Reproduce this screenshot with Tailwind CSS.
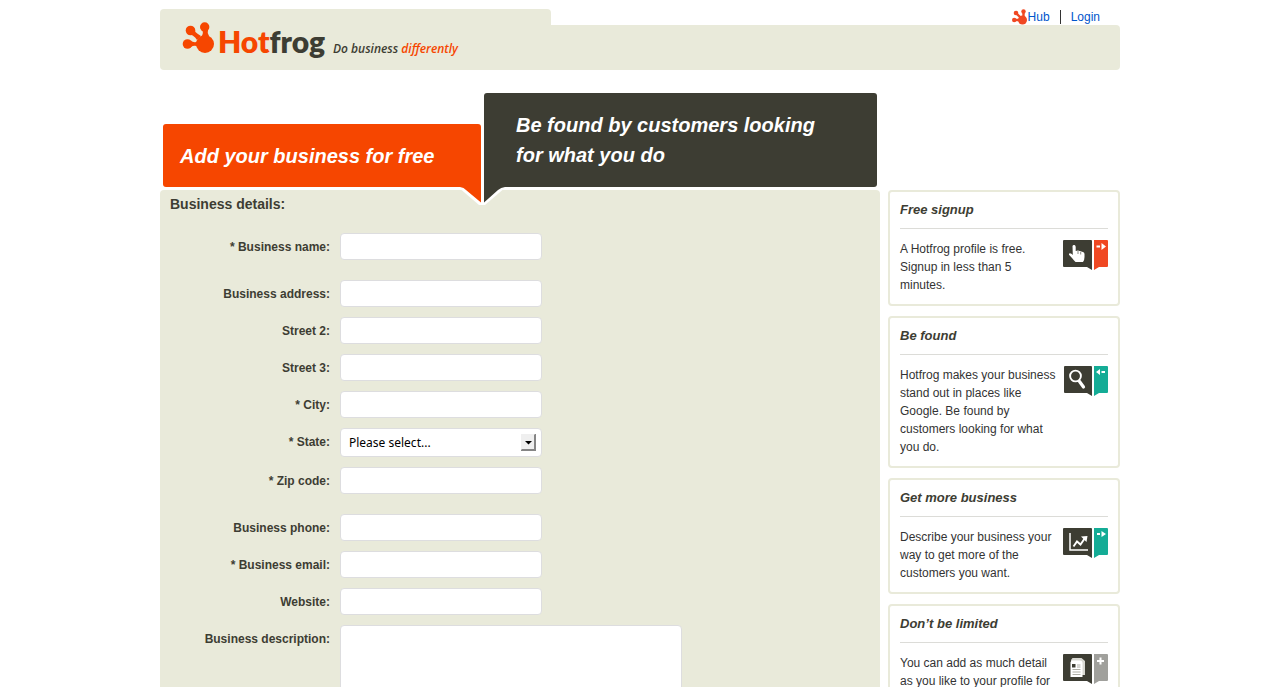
<!DOCTYPE html>
<html lang="en">
<head>
<meta charset="utf-8">
<meta name="viewport" content="width=device-width, initial-scale=1">
<title>Hotfrog - Add your business for free</title>
<script src="https://cdn.jsdelivr.net/npm/@tailwindcss/browser@4"></script>
</head>
<body class="bg-white font-['Liberation_Sans',Arial,sans-serif] text-[12px] leading-[18px] text-[#333]">
<div class="h-screen overflow-hidden">
<div class="mx-auto max-w-[960px]">

  <header class="pt-[9px]">
    <div class="flex h-4 items-stretch justify-between">
      <div class="w-[391px] rounded-t bg-[#e9eada]"></div>
      <nav class="flex items-center pr-5 text-[#0055cc]">
        <svg class="h-4 w-4" viewBox="0 0 16 16" fill="#f04823" stroke="#f04823" aria-hidden="true">
          <circle cx="10.500" cy="11" r="4.500" stroke="none"/><circle cx="4" cy="4" r="2.300" stroke="none"/><circle cx="11.500" cy="2.500" r="2.200" stroke="none"/><circle cx="2.200" cy="11" r="2.200" stroke="none"/>
          <path d="M4 4l6 6M11.500 3v7M2 11h8" stroke-width="2.400"/>
        </svg>
        <a href="#" class="mr-2.5">Hub</a>
        <a href="#" class="relative pl-[11px] before:absolute before:left-0 before:top-[2px] before:h-3.5 before:w-px before:bg-[#333]">Login</a>
      </nav>
    </div>
    <div class="flex h-[45px] items-center rounded-b rounded-tr bg-[#e9eada] pl-[22px]">
      <a href="#" class="-mt-5 flex items-end" aria-label="Hotfrog home">
        <svg class="h-8 w-8" viewBox="0 0 32 32" fill="#f64600" aria-hidden="true">
          <circle cx="23" cy="22" r="9"/><circle cx="8.500" cy="8.500" r="4.800"/><circle cx="22.700" cy="5" r="4.700"/><circle cx="5.500" cy="22" r="4.800"/>
          <path d="M20.500 8q1 3-.500 6h7q-2-3-1-6zM12 6.500q0 3.500 7 7.500l-4 4q-4-6-8-5.500zM9 19q3 2 7 .500v5q-4-1.500-7 .500z"/>
        </svg>
      </a>
      <span class="ml-1 -mt-3.5 font-['Lato',sans-serif] text-[30px] font-extrabold leading-8 text-[#3d3d33] [font-variant-ligatures:none]"><span class="text-[#f64600]">Hot</span>frog</span>
      <span class="ml-2 mt-[3px] font-['Open_Sans','Noto_Sans',sans-serif] text-[12px] font-semibold italic leading-4 text-[#3d3d33]">Do business <span class="text-[#f64600]">differently</span></span>
    </div>
  </header>

  <div class="mt-[23px] flex items-start">
    <main class="min-w-0 flex-1">
      <div class="relative flex items-end gap-[3px] px-[3px] pb-[3px] text-[20px] font-bold italic leading-[30px] text-white">
        <h1 class="flex h-[63px] w-[318px] items-center rounded-[3px] bg-[#f64600] px-[17px]">Add your business for free</h1>
        <h2 class="flex h-[94px] flex-1 items-center rounded-[3px] bg-[#3d3d33] px-8">Be found by customers looking<br>for what you do</h2>
        <svg class="absolute left-[296px] top-[91px] h-[22px] w-[52px]" viewBox="0 0 52 22" aria-hidden="true">
          <path d="M2 3L23 21h6L50 3z" fill="#fff"/>
          <path d="M4 0H25V18.500L10 6Q8 3.500 4 3z" fill="#f64600"/>
          <path d="M28 0H49V3Q45 3.500 42 6L28 18.500z" fill="#3d3d33"/>
        </svg>
      </div>

      <form class="flex flex-col gap-2.5 rounded-t bg-[#e9eada] px-2.5 pb-5 font-bold text-[#3d3d33]" onsubmit="return false">
        <h3 class="mb-[9px] pt-1 text-[14px] leading-5">Business details:</h3>
        <div class="mb-2.5 flex gap-2.5"><label for="name" class="w-40 pt-1.5 text-right leading-4">* Business name:</label><input id="name" type="text" class="h-[27px] w-[202px] rounded border border-[#dddddf] bg-white px-2 font-normal"></div>
        <div class="flex gap-2.5"><label for="street1" class="w-40 pt-1.5 text-right leading-4">Business address:</label><input id="street1" type="text" class="h-[27px] w-[202px] rounded border border-[#dddddf] bg-white px-2 font-normal"></div>
        <div class="flex gap-2.5"><label for="street2" class="w-40 pt-1.5 text-right leading-4">Street 2:</label><input id="street2" type="text" class="h-[27px] w-[202px] rounded border border-[#dddddf] bg-white px-2 font-normal"></div>
        <div class="flex gap-2.5"><label for="street3" class="w-40 pt-1.5 text-right leading-4">Street 3:</label><input id="street3" type="text" class="h-[27px] w-[202px] rounded border border-[#dddddf] bg-white px-2 font-normal"></div>
        <div class="flex gap-2.5"><label for="city" class="w-40 pt-1.5 text-right leading-4">* City:</label><input id="city" type="text" class="h-[27px] w-[202px] rounded border border-[#dddddf] bg-white px-2 font-normal"></div>
        <div class="flex gap-2.5"><label for="state" class="w-40 pt-1.5 text-right leading-4">* State:</label>
          <div class="relative">
            <select id="state" class="block h-[29px] w-[202px] appearance-none rounded border border-[#dddddf] bg-white pl-2 font-['Noto_Sans',sans-serif] text-[12px] font-normal text-black"><option>Please select...</option></select>
            <svg class="pointer-events-none absolute right-1.5 top-1.5 h-[17px] w-[15px]" viewBox="0 0 15 17" aria-hidden="true"><path d="M0 0h15v17H0z" fill="#efefef"/><path d="M14 0h1v17H0v-1l1-1h12V1z" fill="#858585"/><path d="M4 7h7L7.500 10.500z"/></svg>
          </div>
        </div>
        <div class="mb-2.5 flex gap-2.5"><label for="zip" class="w-40 pt-1.5 text-right leading-4">* Zip code:</label><input id="zip" type="text" class="h-[27px] w-[202px] rounded border border-[#dddddf] bg-white px-2 font-normal"></div>
        <div class="flex gap-2.5"><label for="phone" class="w-40 pt-1.5 text-right leading-4">Business phone:</label><input id="phone" type="tel" class="h-[27px] w-[202px] rounded border border-[#dddddf] bg-white px-2 font-normal"></div>
        <div class="flex gap-2.5"><label for="email" class="w-40 pt-1.5 text-right leading-4">* Business email:</label><input id="email" type="email" class="h-[27px] w-[202px] rounded border border-[#dddddf] bg-white px-2 font-normal"></div>
        <div class="flex gap-2.5"><label for="website" class="w-40 pt-1.5 text-right leading-4">Website:</label><input id="website" type="text" class="h-[27px] w-[202px] rounded border border-[#dddddf] bg-white px-2 font-normal"></div>
        <div class="flex gap-2.5"><label for="description" class="w-40 pt-1.5 text-right leading-4">Business description:</label><textarea id="description" class="h-[120px] w-[342px] resize-none rounded border border-[#dddddf] bg-white p-2 font-normal"></textarea></div>
      </form>
    </main>

    <aside class="ml-2 mt-[97px] flex w-[232px] flex-col gap-2.5">
      <section class="rounded border-2 border-[#e9eada] px-2.5 pb-2.5">
        <h3 class="border-b border-[#dcdcd8] py-2 text-[13px] font-bold italic leading-5 text-[#3d3d33]">Free signup</h3>
        <div class="flex justify-between pt-[11px]">
          <p class="w-[158px]">A Hotfrog profile is free. Signup in less than 5 minutes.</p>
          <svg class="h-[31px] w-[45px] shrink-0" viewBox="0 0 45 31" aria-hidden="true">
            <path d="M1 0H28Q29 0 29 1V30L24 27H1Q0 27 0 26V1Q0 0 1 0z" fill="#3d3d33"/>
            <path d="M31 0H44Q45 0 45 1V26Q45 27 44 27H36L31 30z" fill="#f04823"/>
            <path d="M9.500 6Q10 4.500 11.500 5Q12.700 5.500 12.700 7V11L15 10.500L17.500 11.300L20 12Q21.500 12.500 21.500 14V17Q21.500 20 20 22H12.500Q10.500 20 9 18L6.200 15Q5.500 13.500 7 13.200Q8.500 13.500 9.800 15z" fill="#fff"/>
            <path d="M15 11v3M17.700 12v2.500" stroke="#3d3d33" stroke-width=".6"/>
            <path d="M33.500 5.500h3.500v2h-3.500zM38.500 3L43 6.500 38.500 10z" fill="#fff"/>
          </svg>
        </div>
      </section>
      <section class="rounded border-2 border-[#e9eada] px-2.5 pb-2.5">
        <h3 class="border-b border-[#dcdcd8] py-2 text-[13px] font-bold italic leading-5 text-[#3d3d33]">Be found</h3>
        <div class="flex justify-between pt-[11px]">
          <p class="w-[158px]">Hotfrog makes your business stand out in places like Google. Be found by customers looking for what you do.</p>
          <svg class="h-[31px] w-[45px] shrink-0" viewBox="0 0 45 31" aria-hidden="true">
            <path d="M2 0H28Q29 0 29 1V30L24 27H2Q1 27 1 26V1Q1 0 2 0z" fill="#3d3d33"/>
            <path d="M31 0H44Q45 0 45 1V26Q45 27 44 27H36L31 30z" fill="#14ac96"/>
            <circle cx="12.500" cy="10" r="5.400" fill="none" stroke="#fff" stroke-width="1.900"/>
            <path d="M16.500 15.500L20.500 21" stroke="#fff" stroke-width="3.200" stroke-linecap="round"/>
            <path d="M37 3V9L33 6zM38.500 5h3.500V7h-3.500z" fill="#fff"/>
          </svg>
        </div>
      </section>
      <section class="rounded border-2 border-[#e9eada] px-2.5 pb-2.5">
        <h3 class="border-b border-[#dcdcd8] py-2 text-[13px] font-bold italic leading-5 text-[#3d3d33]">Get more business</h3>
        <div class="flex justify-between pt-[11px]">
          <p class="w-[158px]">Describe your business your way to get more of the customers you want.</p>
          <svg class="h-[31px] w-[45px] shrink-0" viewBox="0 0 45 31" aria-hidden="true">
            <path d="M1 0H28Q29 0 29 1V30L24 27H1Q0 27 0 26V1Q0 0 1 0z" fill="#3d3d33"/>
            <path d="M31 0H44Q45 0 45 1V26Q45 27 44 27H36L31 30z" fill="#14ac96"/>
            <path d="M7 5V22H25" fill="none" stroke="#fff" stroke-width="1.500"/>
            <path d="M10.500 18.500L14 13.500 17.500 16.500 22 10" fill="none" stroke="#fff" stroke-width="1.900"/>
            <path d="M18 8.500L24.500 8 23.500 14z" fill="#fff"/>
            <path d="M34 5h3v2h-3zM38.500 3L43 6 38.500 9z" fill="#fff"/>
          </svg>
        </div>
      </section>
      <section class="rounded border-2 border-[#e9eada] px-2.5 pb-2.5">
        <h3 class="border-b border-[#dcdcd8] py-2 text-[13px] font-bold italic leading-5 text-[#3d3d33]">Don’t be limited</h3>
        <div class="flex justify-between pt-[11px]">
          <p class="w-[158px]">You can add as much detail as you like to your profile for free.</p>
          <svg class="h-[31px] w-[45px] shrink-0" viewBox="0 0 45 31" aria-hidden="true">
            <path d="M1 0H28Q29 0 29 1V30L24 27H1Q0 27 0 26V1Q0 0 1 0z" fill="#3d3d33"/>
            <path d="M31 0H44Q45 0 45 1V26Q45 27 44 27H36L31 30z" fill="#a0a09c"/>
            <path d="M9.500 4H18.500L22 7V21H19V9H8V6z" fill="#d8d8d2"/>
            <path d="M9 6.500H17Q19.500 6.500 19.500 9.500V23H7.500V8z" fill="#fff"/>
            <path d="M9 10h3.500v3.500h-3.500z" fill="#3d3d33"/>
            <path d="M14 11h3.500M14 13h3.500M9.500 15.500h8M9.500 18h8M9.500 20.500h8" stroke="#99998f" stroke-width=".8"/>
            <path d="M37.500 3.500v7M34 7h7" stroke="#fff" stroke-width="2"/>
          </svg>
        </div>
      </section>
    </aside>
  </div>
</div>
</div>
</body>
</html>
